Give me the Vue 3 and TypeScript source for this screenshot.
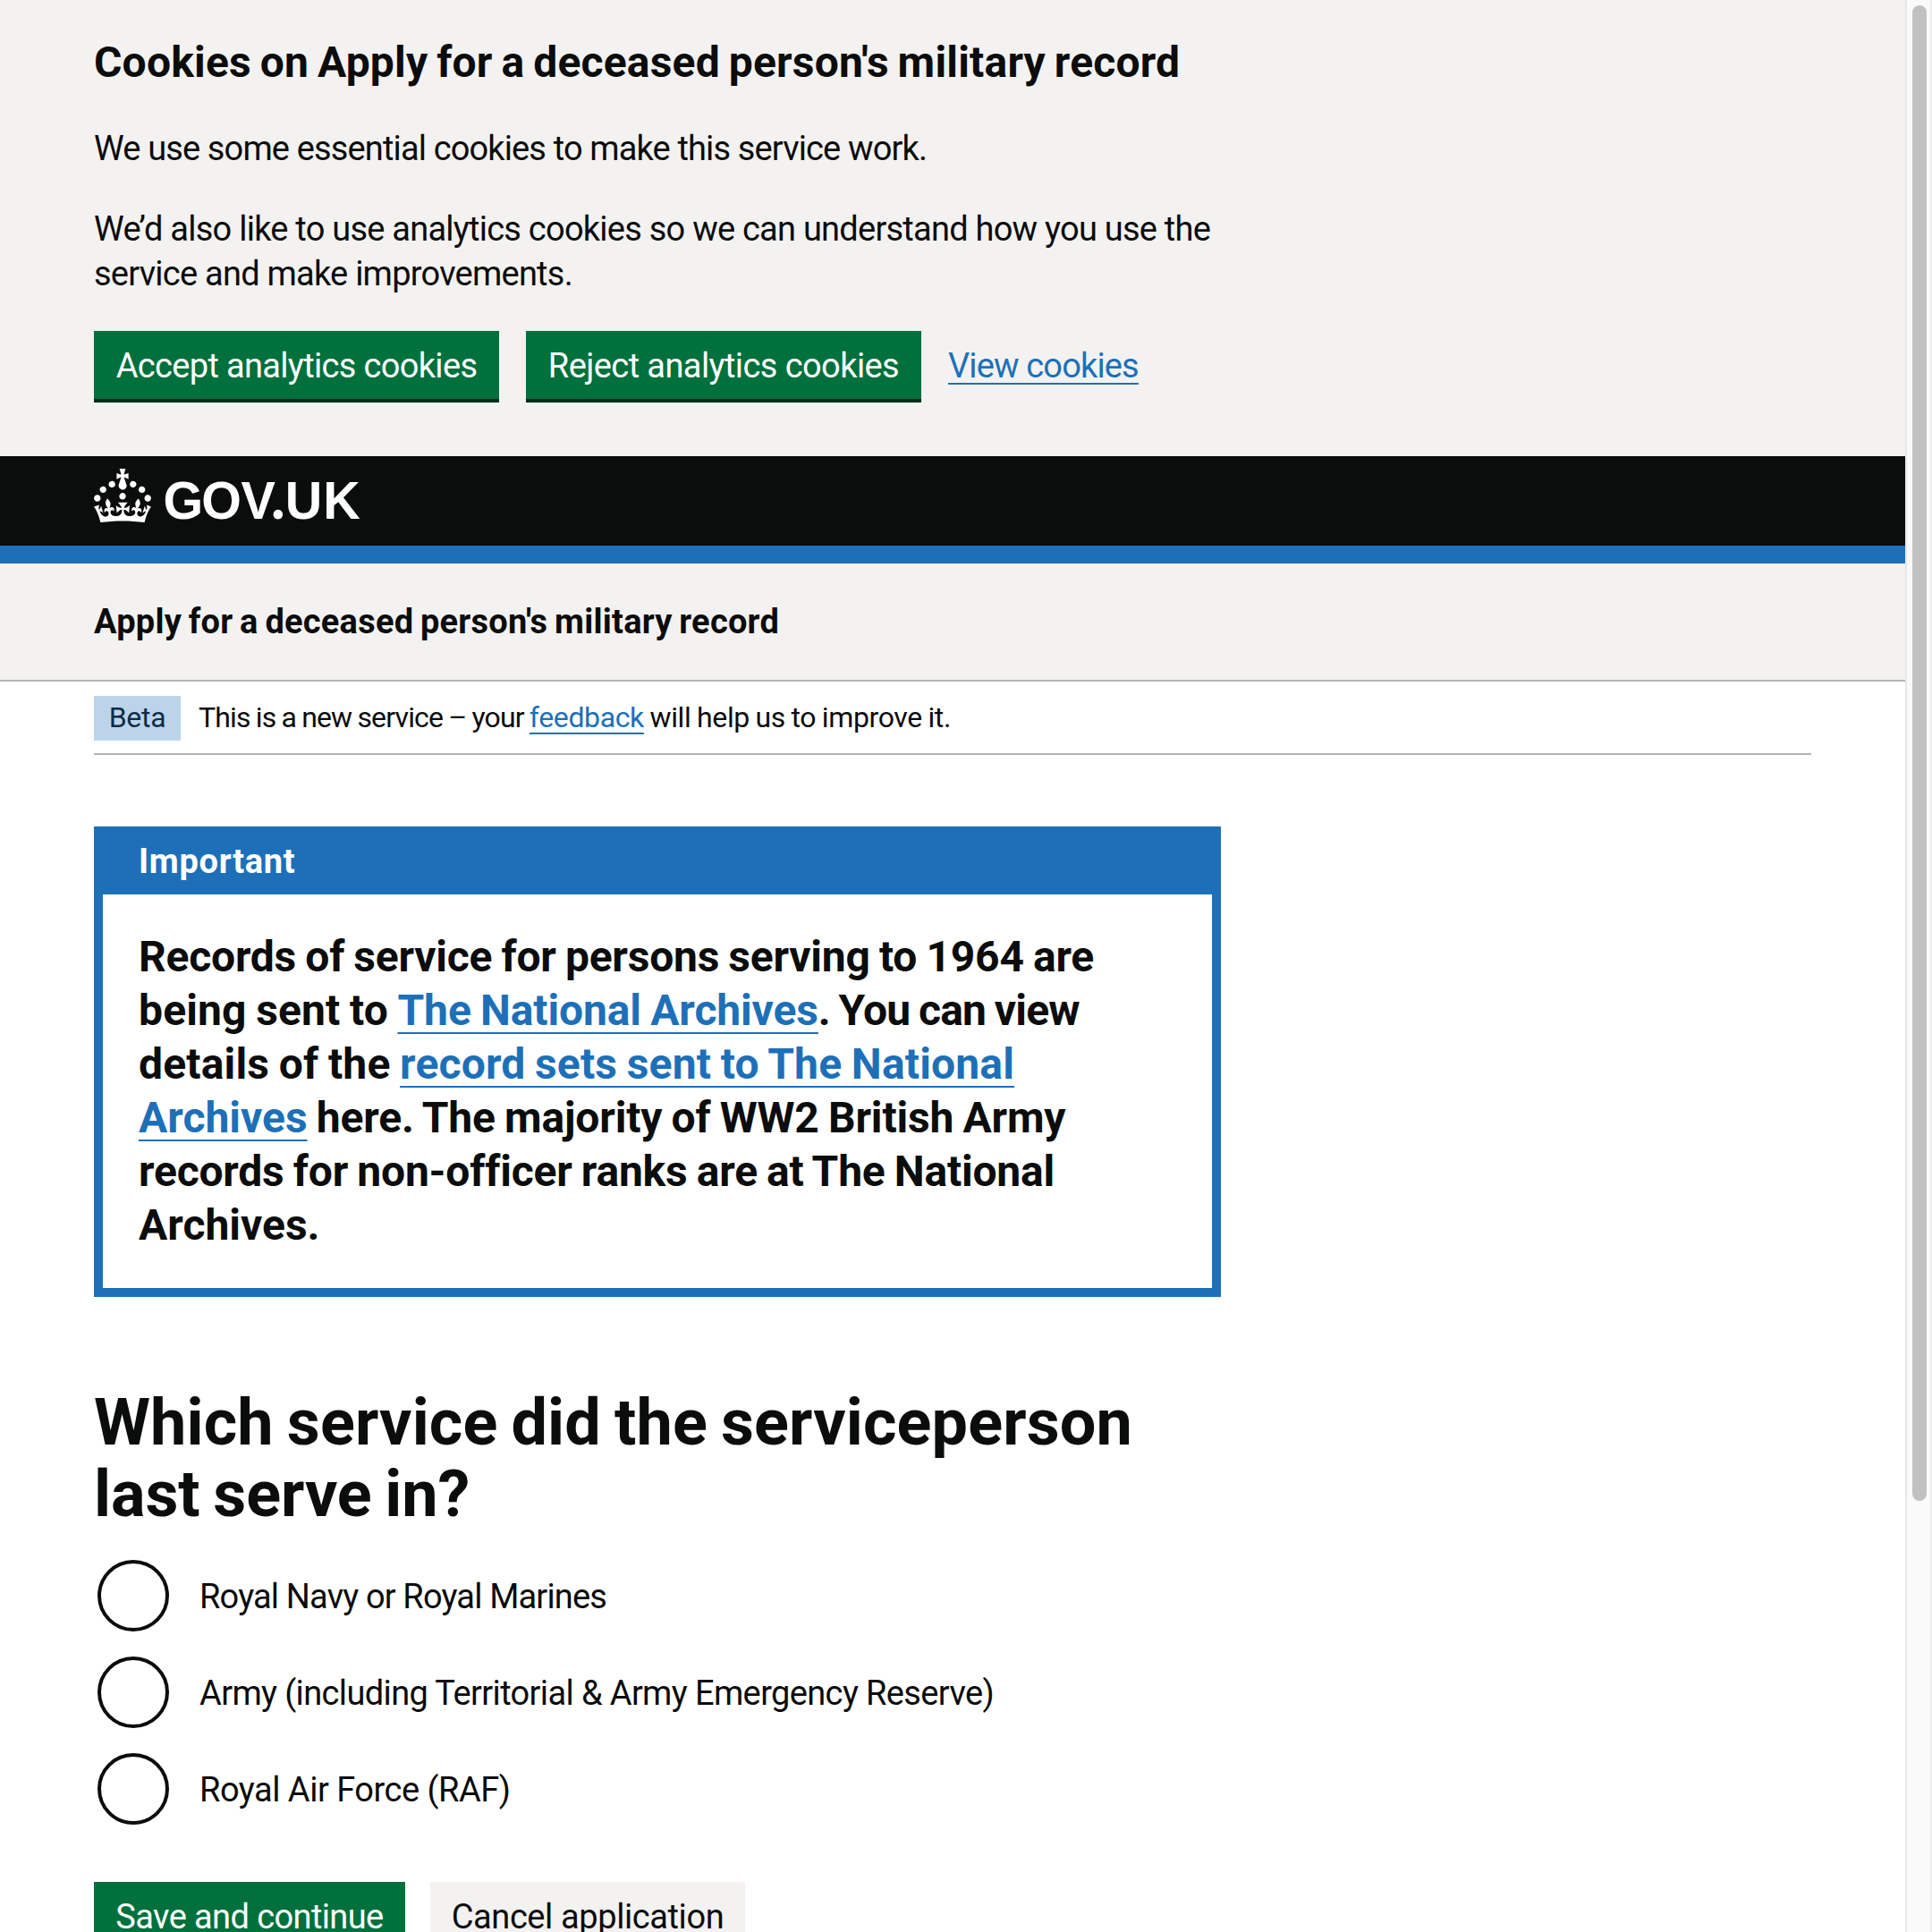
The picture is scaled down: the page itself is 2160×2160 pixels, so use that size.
<script setup lang="ts">
interface ServiceOption {
  value: string
  label: string
}

const serviceName = "Apply for a deceased person's military record"

const options: ServiceOption[] = [
  { value: 'navy', label: 'Royal Navy or Royal Marines' },
  { value: 'army', label: 'Army (including Territorial & Army Emergency Reserve)' },
  { value: 'raf', label: 'Royal Air Force (RAF)' },
]
</script>

<template>
  <div class="window">
    <div class="page">
      <section class="cookie-banner">
        <h2 class="cookie-heading">Cookies on {{ serviceName }}</h2>
        <p class="cookie-text essential">We use some essential cookies to make this service work.</p>
        <p class="cookie-text">
          We’d also like to use analytics cookies so we can understand how you use the<br />service and make improvements.
        </p>
        <div class="cookie-actions">
          <button class="button accept" type="button">Accept analytics cookies</button>
          <button class="button reject" type="button">Reject analytics cookies</button>
          <a class="link view-cookies" href="#">View cookies</a>
        </div>
      </section>

      <header class="header">
        <svg class="crown" viewBox="0 0 32 30" width="64" height="60" fill="#fff" aria-hidden="true">
          <path
            d="M22.6 10.4c-1 .4-2-.1-2.4-1-.4-.9.1-2 1-2.4.9-.4 2 .1 2.4 1s-.1 2-1 2.4m-5.9 6.7c-.9.4-2-.1-2.4-1-.4-.9.1-2 1-2.4.9-.4 2 .1 2.4 1s-.1 2-1 2.4m10.8-3.7c-1 .4-2-.1-2.4-1-.4-.9.1-2 1-2.4.9-.4 2 .1 2.4 1s0 2-1 2.4m3.3 4.8c-1 .4-2-.1-2.4-1-.4-.9.1-2 1-2.4.9-.4 2 .1 2.4 1s-.1 2-1 2.4M17 4.7l2.3 1.2V2.5l-2.3.7-.2-.2.9-3h-3.4l.9 3-.2.2c-.1.1-2.3-.7-2.3-.7v3.4L15 4.7c.1.1.1.2.2.2l-1.3 4c-.1.2-.1.4-.1.6 0 1.1.8 2 1.9 2.2h.7c1-.2 1.9-1.1 1.9-2.1 0-.2 0-.4-.1-.6l-1.3-4c-.1-.2 0-.2.1-.3m-7.6 5.7c.9.4 2-.1 2.4-1 .4-.9-.1-2-1-2.4-.9-.4-2 .1-2.4 1s0 2 1 2.4m-5 3c.9.4 2-.1 2.4-1 .4-.9-.1-2-1-2.4-.9-.4-2 .1-2.4 1s.1 2 1 2.4m-3.2 4.8c.9.4 2-.1 2.4-1 .4-.9-.1-2-1-2.4-.9-.4-2 .1-2.4 1s0 2 1 2.4m14.8 11c4.4 0 8.6.3 12.3.8 1.1-4.5 2.4-7 3.7-8.8l-2.5-.9c.2 1.3.3 1.9 0 2.7-.4-.4-.8-1.1-1.1-2.3l-1.2 4c.7-.5 1.3-.8 2-.9-1.1 2.5-2.6 3.1-3.5 3-1.1-.2-1.7-1.2-1.5-2.1.3-1.2 1.5-1.5 2.1-.1 1.1-2.3-.8-3-2-2.3 1.9-1.9 2.1-3.5.6-5.6-2.1 1.6-2.1 3.2-1.2 5.5-1.2-1.4-3.2-.6-2.5 1.6.9-1.4 2.1-.5 1.9.8-.2 1.1-1.7 2.1-3.5 1.9-2.7-.2-2.9-2.1-2.9-3.6.7-.1 1.9.5 2.9 1.9l.4-4.3c-1.1 1.1-2.1 1.4-3.2 1.4.4-1.2 2.1-3 2.1-3h-5.4s1.7 1.9 2.1 3c-1.1 0-2.1-.2-3.2-1.4l.4 4.3c1-1.4 2.2-2 2.9-1.9-.1 1.5-.2 3.4-2.9 3.6-1.9.2-3.4-.8-3.5-1.9-.2-1.3 1-2.2 1.9-.8.7-2.3-1.2-3-2.5-1.6.9-2.2.9-3.9-1.2-5.5-1.5 2-1.3 3.7.6 5.6-1.2-.7-3.1 0-2 2.3.6-1.4 1.8-1.1 2.1.1.2.9-.3 1.9-1.5 2.1-.9.2-2.4-.5-3.5-3 .6 0 1.2.3 2 .9l-1.2-4c-.3 1.1-.7 1.9-1.1 2.3-.3-.8-.2-1.4 0-2.7l-2.9.9C1.3 23 2.6 25.5 3.7 30c3.7-.5 7.9-.8 12.3-.8"
          />
        </svg>
        <svg class="wordmark" viewBox="-5 -14 230 100" width="230" height="100" fill="#fff" aria-label="GOV.UK">
          <text class="wordmark-text" transform="scale(.965 1)" y="56" x="-2.6 41.7 87.7 122.5 138.5 182.6">GOV<tspan class="wordmark-dot">.</tspan>UK</text>
        </svg>
      </header>

      <div class="service-bar">
        <span class="service-name">{{ serviceName }}</span>
      </div>

      <main class="container">
        <div class="phase-banner">
          <strong class="tag">Beta</strong>
          <span class="phase-text"
            >This is a new service – your <a class="link feedback" href="#">feedback</a
            ><span class="phase-tail"> will help us to improve it.</span></span
          >
        </div>

        <section class="notification">
          <h2 class="notification-title">Important</h2>
          <p class="notification-body">
            <span class="l1">Records of service for persons serving to 1964 are</span><br />
            <span class="l2">being sent to <a class="link l2-link" href="#">The National Archives</a></span
            ><span class="l2b">. You can view</span><br />
            <span class="l3">details of the <a class="link" href="#">record sets sent to The National</a></span><br />
            <a class="link archives" href="#">Archives</a><span class="l4"> here. The majority of WW2 British Army</span><br />
            <span class="l5">records for non-officer ranks are at The National</span><br />
            <span class="archives">Archives.</span>
          </p>
        </section>

        <form class="question" @submit.prevent>
          <h1 class="question-title">
            Which service did the serviceperson<br /><span class="question-end">last serve in?</span>
          </h1>
          <div class="radios">
            <label v-for="o in options" :key="o.value" class="radio" :class="o.value">
              <span class="radio-circle"></span>
              <span class="radio-label">{{ o.label }}</span>
            </label>
          </div>
          <div class="form-actions">
            <button class="button save" type="submit">Save and continue</button>
            <button class="button cancel" type="button">Cancel application</button>
          </div>
        </form>
      </main>
    </div>

    <div class="scrollbar"><div class="thumb"></div></div>
  </div>
</template>

<style>
body {
  margin: 0;
  overflow: hidden;
}
</style>

<style scoped>
.window {
  display: flex;
  width: 2160px;
  height: 2160px;
  overflow: hidden;
  background: #fff;
  color: #0b0c0c;
  font-family: Roboto, 'Liberation Sans', sans-serif;
  font-size: 38px;
  line-height: 50px;
  letter-spacing: -0.85px;
  white-space: nowrap;
}

.page {
  width: 2130px;
  height: 2160px;
  overflow: hidden;
}

h1,
h2,
p {
  margin: 0;
}

.link {
  color: #1d70b8;
  text-decoration: underline;
  text-decoration-thickness: 2px;
  text-underline-offset: 6px;
  text-decoration-skip-ink: none;
}

/* Cookie banner */
.cookie-banner {
  box-sizing: border-box;
  height: 510px;
  padding: 40px 105px 0;
  background: #f3f2f1;
}

.cookie-heading {
  margin-bottom: 41px;
  font-size: 48px;
  line-height: 60px;
  font-weight: 700;
  letter-spacing: 0.2px;
  word-spacing: -2.3px;
}

.cookie-text {
  margin-bottom: 40px;
  letter-spacing: -0.76px;
}

.cookie-text.essential {
  letter-spacing: -0.86px;
}

.cookie-actions {
  display: flex;
  align-items: flex-start;
  margin-top: -1px;
}

.button {
  box-sizing: border-box;
  height: 76px;
  margin: 0;
  padding: 2px 0 0;
  border: 0;
  background: #00703c;
  box-shadow: 0 4px 0 #002d18;
  color: #fff;
  font: inherit;
  line-height: 74px;
  text-align: center;
  white-space: nowrap;
}

.accept {
  width: 453px;
  margin-right: 30px;
  letter-spacing: -0.66px;
}

.reject {
  width: 442px;
  margin-right: 30px;
  letter-spacing: -0.58px;
}

.view-cookies {
  line-height: 78px;
}

/* Masthead */
.header {
  display: flex;
  box-sizing: border-box;
  height: 120px;
  padding: 0 105px;
  border-bottom: 20px solid #1d70b8;
  background: #0b0c0c;
}

.crown {
  margin-top: 14px;
}

.wordmark {
  margin-left: 11px;
}

.wordmark-text {
  font: 700 59.5px 'Liberation Sans', sans-serif;
  letter-spacing: 0;
}

.wordmark-dot {
  font: 900 66px Lato, sans-serif;
}

.service-bar {
  box-sizing: border-box;
  height: 132px;
  padding: 40px 105px 0;
  border-bottom: 2px solid #b1b4b6;
  background: #f3f2f1;
  font-weight: 700;
  letter-spacing: 0.24px;
  word-spacing: -2px;
}

.container {
  width: 1920px;
  margin: 0 105px;
}

/* Phase banner */
.phase-banner {
  display: flex;
  box-sizing: border-box;
  height: 82px;
  padding-top: 16px;
  border-bottom: 2px solid #b1b4b6;
  font-size: 32px;
  line-height: 48px;
  letter-spacing: -0.84px;
  word-spacing: -1px;
}

.tag {
  width: 97px;
  height: 50px;
  margin-right: 20px;
  background: #bbd4ea;
  color: #0c2d4a;
  font-weight: 400;
  letter-spacing: -0.3px;
  text-align: center;
}

.feedback {
  letter-spacing: -0.38px;
}

.phase-tail {
  letter-spacing: -0.36px;
}

/* Notification banner */
.notification {
  box-sizing: border-box;
  width: 1260px;
  height: 526px;
  margin-top: 80px;
  border: 10px solid #1d70b8;
  border-top: 0;
}

.notification-title {
  height: 76px;
  padding-left: 40px;
  background: #1d70b8;
  color: #fff;
  font-size: 38px;
  line-height: 78px;
  font-weight: 700;
  letter-spacing: 0.7px;
}

.notification-body {
  padding: 40px 40px 0;
  font-size: 48px;
  line-height: 60px;
  font-weight: 700;
  word-spacing: -1.5px;
}

.notification-body .link {
  text-underline-offset: 8px;
}

.l1 {
  letter-spacing: -0.22px;
}

.l2 {
  letter-spacing: 0.13px;
}

.l2-link {
  letter-spacing: -0.12px;
}

.l2b {
  letter-spacing: -0.8px;
}

.l3 {
  letter-spacing: 0.17px;
}

.archives {
  letter-spacing: 0;
}

.l4 {
  letter-spacing: -0.17px;
}

.l5 {
  letter-spacing: -0.2px;
}

/* Question */
.question-title {
  margin-top: 101px;
  font-size: 72px;
  line-height: 80px;
  font-weight: 700;
  letter-spacing: 0.12px;
  word-spacing: -3px;
}

.question-end {
  letter-spacing: -0.1px;
}

.radios {
  display: flex;
  flex-direction: column;
  gap: 28px;
  padding: 33px 0 0 4px;
}

.radio {
  display: flex;
  align-items: center;
  height: 80px;
}

.radio-circle {
  box-sizing: border-box;
  width: 80px;
  height: 80px;
  margin-right: 34px;
  border: 4px solid #0b0c0c;
  border-radius: 50%;
}

.radio-label {
  padding-top: 2px;
  letter-spacing: -0.63px;
}

.navy .radio-label {
  letter-spacing: -0.84px;
}

.raf .radio-label {
  letter-spacing: -0.5px;
}

.form-actions {
  display: flex;
  margin-top: 64px;
}

.save {
  width: 348px;
  margin-right: 28px;
  letter-spacing: -0.6px;
}

.cancel {
  width: 352px;
  background: #f3f2f1;
  box-shadow: 0 4px 0 #929191;
  color: #0b0c0c;
  letter-spacing: -0.4px;
}

/* Window scrollbar */
.scrollbar {
  box-sizing: border-box;
  width: 30px;
  height: 2160px;
  padding: 6px 4px 0 6px;
  border-left: 2px solid #e8e8e8;
  border-right: 2px solid #ededed;
  background: #fafafa;
}

.thumb {
  width: 16px;
  height: 1672px;
  border-radius: 8px;
  background: #c1c1c1;
}
</style>
